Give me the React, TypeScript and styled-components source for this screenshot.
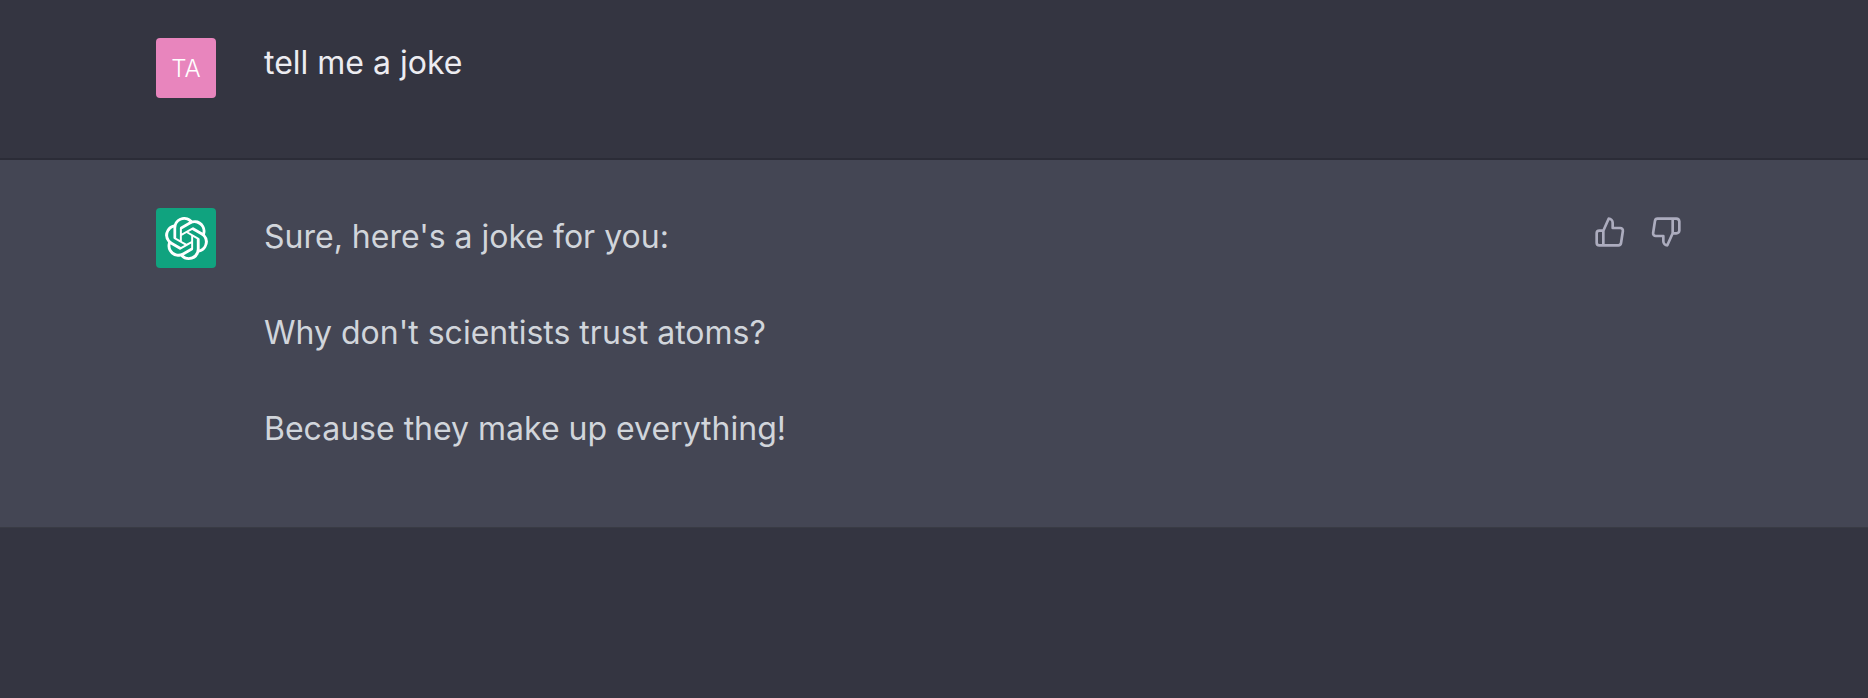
import React from "react";
import styled, { createGlobalStyle } from "styled-components";
import { FiThumbsUp, FiThumbsDown } from "react-icons/fi";
import { SiOpenai } from "react-icons/si";

const GlobalStyle = createGlobalStyle`
  body { margin: 0; background: #343541; font-family: Inter, "Liberation Sans", sans-serif; }
`;

const Message = styled.article<{ $reply?: boolean }>`
  display: flex;
  justify-content: center;
  box-sizing: border-box;
  padding: ${(p) => (p.$reply ? "48px 62px 69px 32px" : "38px 62px 60px 32px")};
  color: ${(p) => (p.$reply ? "#d1d5db" : "#ececf1")};
  background: ${(p) => (p.$reply ? "#444654" : "#343541")};
  border-bottom: ${(p) => (p.$reply ? "1px solid #393b44" : "2px solid #2b2c37")};
`;

const Row = styled.div`
  display: flex;
  align-items: flex-start;
  gap: 48px;
  width: 100%;
  max-width: 1526px;
`;

const Avatar = styled.div<{ $color: string }>`
  display: flex;
  flex: none;
  align-items: center;
  justify-content: center;
  width: 60px;
  height: 60px;
  border-radius: 4px;
  background: ${(p) => p.$color};
  color: #fff;
  font-size: 24px;
  font-weight: 300;
`;

const Logo = styled(SiOpenai)`
  width: 43px;
  height: 43px;
`;

const Body = styled.div<{ $reply?: boolean }>`
  display: flex;
  flex: 1;
  flex-direction: column;
  gap: 38px;
  font-size: 32px;
  line-height: ${(p) => (p.$reply ? "58px" : "50px")};
`;

const Paragraph = styled.p`
  margin: 0;
`;

const Actions = styled.div`
  display: flex;
  gap: 24px;
  padding-top: 8px;
`;

const IconButton = styled.button`
  display: flex;
  padding: 0;
  border: 0;
  background: none;
  color: #acacbe;
  cursor: pointer;
`;

export default function App() {
  return (
    <main>
      <GlobalStyle />
      <Message>
        <Row>
          <Avatar $color="#e885bd">TA</Avatar>
          <Body>
            <Paragraph>tell me a joke</Paragraph>
          </Body>
        </Row>
      </Message>
      <Message $reply>
        <Row>
          <Avatar $color="#10a37f">
            <Logo aria-hidden />
          </Avatar>
          <Body $reply>
            <Paragraph>Sure, here's a joke for you:</Paragraph>
            <Paragraph>Why don't scientists trust atoms?</Paragraph>
            <Paragraph>Because they make up everything!</Paragraph>
          </Body>
          <Actions>
            <IconButton type="button" aria-label="Good response">
              <FiThumbsUp size={32} />
            </IconButton>
            <IconButton type="button" aria-label="Bad response">
              <FiThumbsDown size={32} />
            </IconButton>
          </Actions>
        </Row>
      </Message>
    </main>
  );
}
